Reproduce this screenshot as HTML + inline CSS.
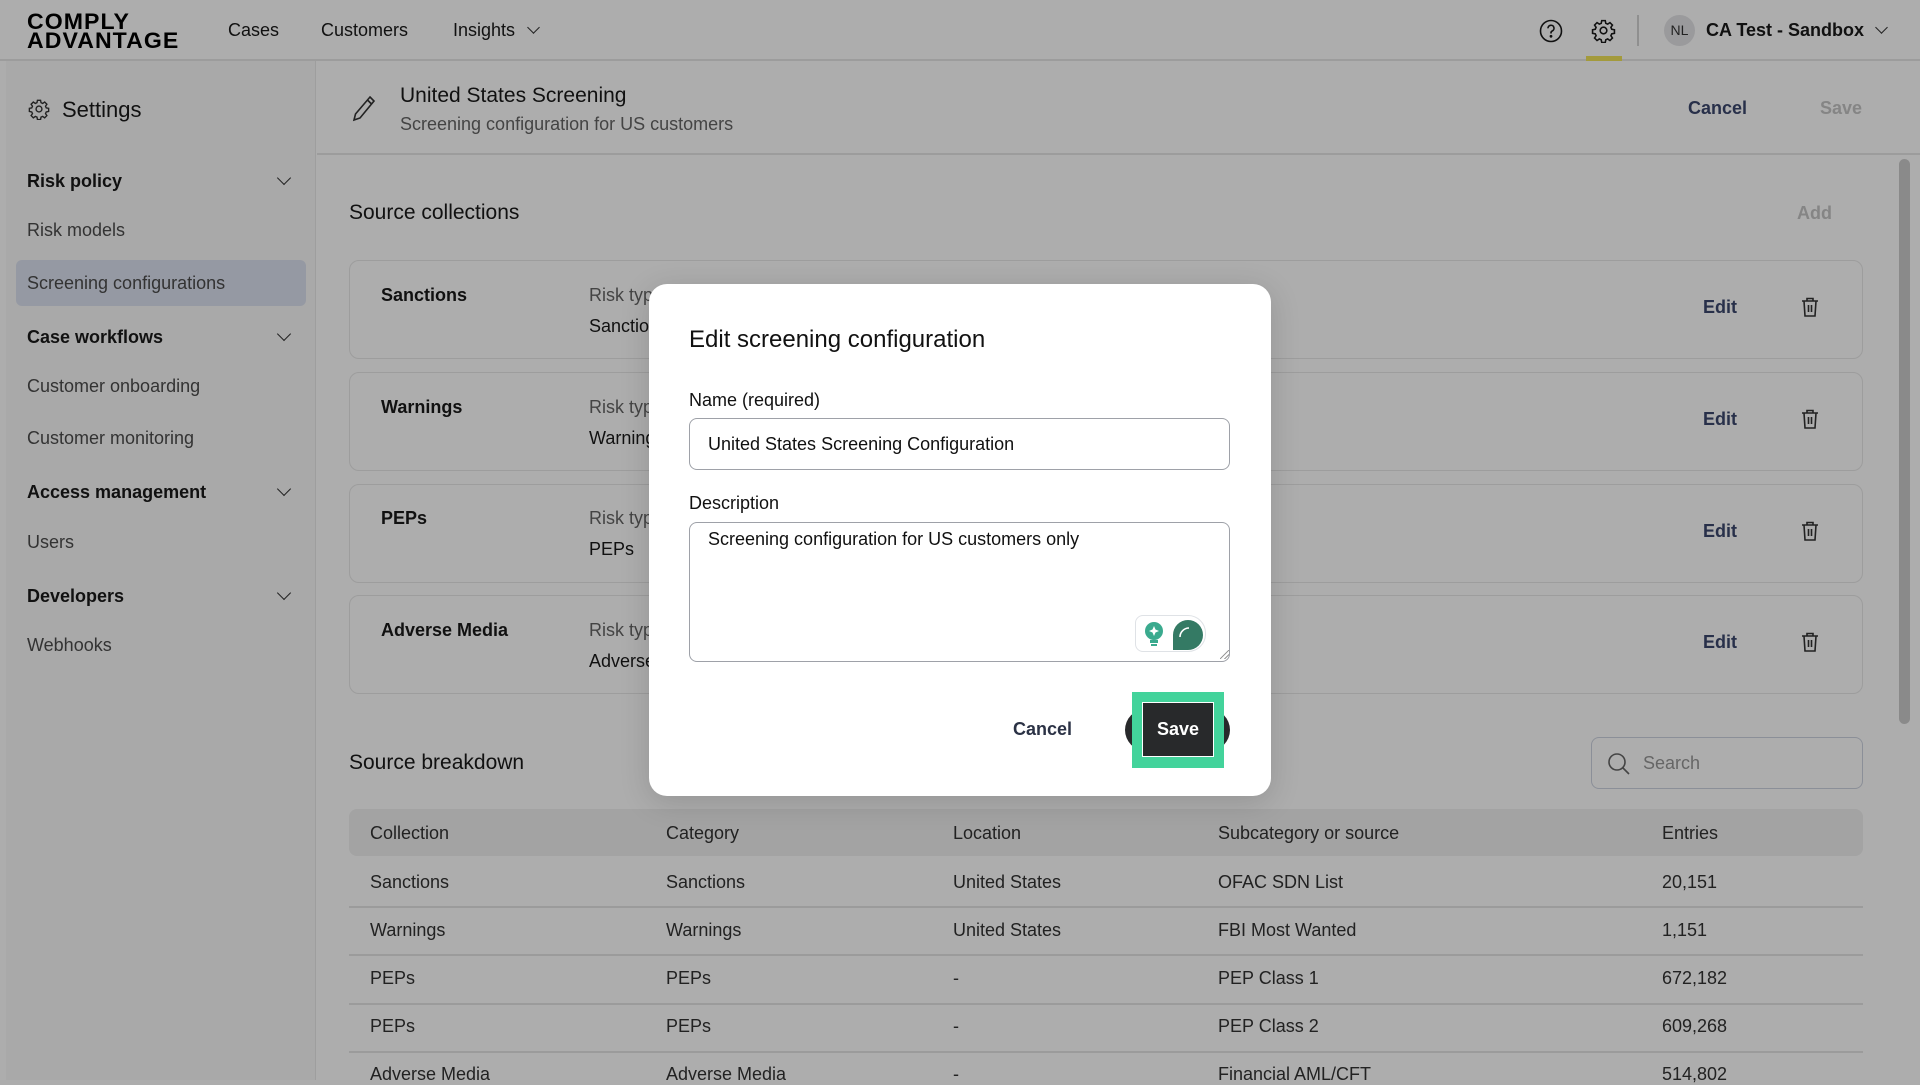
<!DOCTYPE html>
<html><head><meta charset="utf-8"><style>
*{box-sizing:border-box;margin:0;padding:0}
body{width:1920px;height:1080px;overflow:hidden;background:#adadad;font-family:"Liberation Sans",Arial,sans-serif;color:#111;position:relative}
.a{position:absolute;white-space:nowrap}
.hdr{position:absolute;left:0;top:0;width:1920px;height:61px;background:#adadad;border-bottom:2px solid #9c9c9c}
.side{position:absolute;left:6px;top:61px;width:310px;height:1019px;background:#a9a9a9;border-right:1px solid #9e9e9e}
.sb{font-weight:bold;font-size:18px;color:#111}
.sn{font-size:18px;color:#333}
.chev{position:absolute;width:10px;height:10px;border-right:1.6px solid #222;border-bottom:1.6px solid #222;transform:rotate(45deg)}
.card{position:absolute;left:349px;width:1514px;height:99px;border:1.5px solid #9d9d9d;border-radius:10px}
.ct{font-weight:bold;font-size:18px}
.rt{font-size:18px;color:#444}
.rv{font-size:18px;color:#111}
.ed{font-weight:bold;font-size:18px;color:#28304a}
.td{font-size:18px;color:#222}
.line{position:absolute;left:349px;width:1514px;height:1.5px;background:#9b9b9b}
</style></head><body>
<div class="hdr"></div>
<div class="a" style="left:27px;top:12px;font-weight:900;font-size:22px;line-height:19px;letter-spacing:1px;color:#000;transform:scaleX(1.05);transform-origin:left">COMPLY<br>ADVANTAGE</div>
<div class="a" style="left:228px;top:20px;font-size:18px">Cases</div>
<div class="a" style="left:321px;top:20px;font-size:18px">Customers</div>
<div class="a" style="left:453px;top:20px;font-size:18px">Insights</div>
<div class="chev" style="left:529px;top:23px;width:9px;height:9px;border-width:1.3px"></div>
<svg class="a" style="left:1539px;top:19px" width="24" height="24" viewBox="0 0 24 24" fill="none" stroke="#111" stroke-width="1.6"><circle cx="12" cy="12" r="10.5"/><path d="M9 9.3a3 3 0 1 1 4.2 2.7c-.8.4-1.2 1-1.2 1.8v.7"/><circle cx="12" cy="17.3" r=".6" fill="#111"/></svg>
<svg class="a" style="left:1591px;top:18px" width="25" height="25" viewBox="0 0 24 24" fill="none" stroke="#111" stroke-width="1.5"><circle cx="12" cy="12" r="3.2"/><path d="M10.3 2.5h3.4l.5 2.6 1.8.8 2.2-1.5 2.4 2.4-1.5 2.2.8 1.8 2.6.5v3.4l-2.6.5-.8 1.8 1.5 2.2-2.4 2.4-2.2-1.5-1.8.8-.5 2.6h-3.4l-.5-2.6-1.8-.8-2.2 1.5-2.4-2.4 1.5-2.2-.8-1.8-2.6-.5v-3.4l2.6-.5.8-1.8-1.5-2.2 2.4-2.4 2.2 1.5 1.8-.8z"/></svg>
<div class="a" style="left:1586px;top:56px;width:36px;height:5px;background:#a39a3c"></div>
<div class="a" style="left:1637px;top:15px;width:1.5px;height:31px;background:#8f8f8f"></div>
<div class="a" style="left:1664px;top:15px;width:31px;height:31px;border-radius:50%;background:#9a9a9c;font-size:14px;text-align:center;line-height:31px;color:#222">NL</div>
<div class="a" style="left:1706px;top:20px;font-size:18px;font-weight:bold;color:#111">CA Test - Sandbox</div>
<div class="chev" style="left:1877px;top:23px;width:9px;height:9px;border-width:1.3px"></div>

<div class="side"></div>
<svg class="a" style="left:28px;top:98px" width="22" height="22" viewBox="0 0 24 24" fill="none" stroke="#222" stroke-width="1.5"><circle cx="12" cy="12" r="3.2"/><path d="M10.3 2.5h3.4l.5 2.6 1.8.8 2.2-1.5 2.4 2.4-1.5 2.2.8 1.8 2.6.5v3.4l-2.6.5-.8 1.8 1.5 2.2-2.4 2.4-2.2-1.5-1.8.8-.5 2.6h-3.4l-.5-2.6-1.8-.8-2.2 1.5-2.4-2.4 1.5-2.2-.8-1.8-2.6-.5v-3.4l2.6-.5.8-1.8-1.5-2.2 2.4-2.4 2.2 1.5 1.8-.8z"/></svg>
<div class="a" style="left:62px;top:97px;font-size:22px;color:#111">Settings</div>
<div class="a sb" style="left:27px;top:171px">Risk policy</div><div class="chev" style="left:279px;top:173px"></div>
<div class="a sn" style="left:27px;top:220px">Risk models</div>
<div class="a" style="left:16px;top:260px;width:290px;height:46px;background:#9599a3;border-radius:6px"></div>
<div class="a sn" style="left:27px;top:273px">Screening configurations</div>
<div class="a sb" style="left:27px;top:327px">Case workflows</div><div class="chev" style="left:279px;top:329px"></div>
<div class="a sn" style="left:27px;top:376px">Customer onboarding</div>
<div class="a sn" style="left:27px;top:428px">Customer monitoring</div>
<div class="a sb" style="left:27px;top:482px">Access management</div><div class="chev" style="left:279px;top:484px"></div>
<div class="a sn" style="left:27px;top:532px">Users</div>
<div class="a sb" style="left:27px;top:586px">Developers</div><div class="chev" style="left:279px;top:588px"></div>
<div class="a sn" style="left:27px;top:635px">Webhooks</div>

<div class="a" style="left:317px;top:153px;width:1603px;height:1.5px;background:#9c9c9c"></div>
<svg class="a" style="left:351px;top:94px" width="26" height="28" viewBox="0 0 26 28" fill="none" stroke="#222" stroke-width="1.6"><path d="M19 3l4 4L9 24l-6 2 1.5-6z"/><path d="M16.5 6l4 4"/></svg>
<div class="a" style="left:400px;top:84px;font-size:21px;color:#111">United States Screening</div>
<div class="a" style="left:400px;top:114px;font-size:18px;color:#444">Screening configuration for US customers</div>
<div class="a ed" style="left:1688px;top:98px">Cancel</div>
<div class="a" style="left:1820px;top:98px;font-size:18px;font-weight:bold;color:#858585">Save</div>
<div class="a" style="left:1899px;top:159px;width:11px;height:565px;border-radius:6px;background:#8a8a8a"></div>

<div class="a" style="left:349px;top:201px;font-size:21px;color:#111">Source collections</div>
<div class="a" style="left:1797px;top:203px;font-size:18px;font-weight:bold;color:#858585">Add</div>

<div class="card" style="top:260px"></div>
<div class="card" style="top:372px"></div>
<div class="card" style="top:484px"></div>
<div class="card" style="top:595px"></div>
<div class="a ct" style="left:381px;top:285px">Sanctions</div><div class="a rt" style="left:589px;top:285px">Risk type</div><div class="a rv" style="left:589px;top:316px">Sanctions</div>
<div class="a ct" style="left:381px;top:397px">Warnings</div><div class="a rt" style="left:589px;top:397px">Risk type</div><div class="a rv" style="left:589px;top:428px">Warnings</div>
<div class="a ct" style="left:381px;top:508px">PEPs</div><div class="a rt" style="left:589px;top:508px">Risk type</div><div class="a rv" style="left:589px;top:539px">PEPs</div>
<div class="a ct" style="left:381px;top:620px">Adverse Media</div><div class="a rt" style="left:589px;top:620px">Risk type</div><div class="a rv" style="left:589px;top:651px">Adverse Media</div>
<div class="a ed" style="left:1703px;top:297px">Edit</div>
<div class="a ed" style="left:1703px;top:409px">Edit</div>
<div class="a ed" style="left:1703px;top:521px">Edit</div>
<div class="a ed" style="left:1703px;top:632px">Edit</div>
<svg class="a" style="left:1801px;top:297px" width="18" height="20" viewBox="0 0 18 20" fill="none" stroke="#222" stroke-width="1.6"><path d="M1 4h16M6 4V1.5h6V4M3 4l1 15h10l1-15M7.5 8v7M10.5 8v7"/></svg>
<svg class="a" style="left:1801px;top:409px" width="18" height="20" viewBox="0 0 18 20" fill="none" stroke="#222" stroke-width="1.6"><path d="M1 4h16M6 4V1.5h6V4M3 4l1 15h10l1-15M7.5 8v7M10.5 8v7"/></svg>
<svg class="a" style="left:1801px;top:521px" width="18" height="20" viewBox="0 0 18 20" fill="none" stroke="#222" stroke-width="1.6"><path d="M1 4h16M6 4V1.5h6V4M3 4l1 15h10l1-15M7.5 8v7M10.5 8v7"/></svg>
<svg class="a" style="left:1801px;top:632px" width="18" height="20" viewBox="0 0 18 20" fill="none" stroke="#222" stroke-width="1.6"><path d="M1 4h16M6 4V1.5h6V4M3 4l1 15h10l1-15M7.5 8v7M10.5 8v7"/></svg>

<div class="a" style="left:349px;top:751px;font-size:21px;color:#111">Source breakdown</div>
<div class="a" style="left:1591px;top:737px;width:272px;height:52px;border:1.5px solid #8b8f98;border-radius:8px"></div>
<svg class="a" style="left:1607px;top:752px" width="24" height="24" viewBox="0 0 24 24" fill="none" stroke="#444" stroke-width="1.6"><circle cx="10" cy="10" r="8"/><path d="M16 16l6 6"/></svg>
<div class="a" style="left:1643px;top:753px;font-size:18px;color:#666">Search</div>

<div class="a" style="left:349px;top:809px;width:1514px;height:47px;background:#a3a3a3;border-radius:8px"></div>
<div class="a td" style="left:370px;top:823px">Collection</div><div class="a td" style="left:666px;top:823px">Category</div><div class="a td" style="left:953px;top:823px">Location</div><div class="a td" style="left:1218px;top:823px">Subcategory or source</div><div class="a td" style="left:1662px;top:823px">Entries</div>
<div class="a td" style="left:370px;top:872px">Sanctions</div><div class="a td" style="left:666px;top:872px">Sanctions</div><div class="a td" style="left:953px;top:872px">United States</div><div class="a td" style="left:1218px;top:872px">OFAC SDN List</div><div class="a td" style="left:1662px;top:872px">20,151</div>
<div class="line" style="top:906px"></div>
<div class="a td" style="left:370px;top:920px">Warnings</div><div class="a td" style="left:666px;top:920px">Warnings</div><div class="a td" style="left:953px;top:920px">United States</div><div class="a td" style="left:1218px;top:920px">FBI Most Wanted</div><div class="a td" style="left:1662px;top:920px">1,151</div>
<div class="line" style="top:954px"></div>
<div class="a td" style="left:370px;top:968px">PEPs</div><div class="a td" style="left:666px;top:968px">PEPs</div><div class="a td" style="left:953px;top:968px">-</div><div class="a td" style="left:1218px;top:968px">PEP Class 1</div><div class="a td" style="left:1662px;top:968px">672,182</div>
<div class="line" style="top:1003px"></div>
<div class="a td" style="left:370px;top:1016px">PEPs</div><div class="a td" style="left:666px;top:1016px">PEPs</div><div class="a td" style="left:953px;top:1016px">-</div><div class="a td" style="left:1218px;top:1016px">PEP Class 2</div><div class="a td" style="left:1662px;top:1016px">609,268</div>
<div class="line" style="top:1051px"></div>
<div class="a td" style="left:370px;top:1064px">Adverse Media</div><div class="a td" style="left:666px;top:1064px">Adverse Media</div><div class="a td" style="left:953px;top:1064px">-</div><div class="a td" style="left:1218px;top:1064px">Financial AML/CFT</div><div class="a td" style="left:1662px;top:1064px">514,802</div>

<!-- modal -->
<div class="a" style="left:649px;top:284px;width:622px;height:512px;background:#fff;border-radius:18px;box-shadow:0 6px 30px rgba(0,0,0,0.15)"></div>
<div class="a" style="left:689px;top:326px;font-size:24px;color:#111">Edit screening configuration</div>
<div class="a" style="left:689px;top:390px;font-size:18px;color:#111">Name (required)</div>
<div class="a" style="left:689px;top:418px;width:541px;height:52px;border:1.5px solid #9ea1a8;border-radius:8px"></div>
<div class="a" style="left:708px;top:434px;font-size:18px;color:#111">United States Screening Configuration</div>
<div class="a" style="left:689px;top:493px;font-size:18px;color:#111">Description</div>
<div class="a" style="left:689px;top:522px;width:541px;height:140px;border:1.5px solid #9ea1a8;border-radius:8px"></div>
<div class="a" style="left:708px;top:529px;font-size:18px;color:#111">Screening configuration for US customers only</div>
<div class="a" style="left:1135px;top:615px;width:71px;height:37px;border:1.5px solid #dfe2e6;border-radius:8px 18px 18px 8px;background:#fff"></div>
<svg class="a" style="left:1143px;top:621px" width="22" height="26" viewBox="0 0 22 26"><circle cx="11" cy="10" r="9" fill="#3aaa8e"/><rect x="7" y="19" width="8" height="3" fill="#3aaa8e"/><rect x="8" y="23" width="6" height="2" fill="#3aaa8e"/><path d="M11 5l1.5 3.5L16 10l-3.5 1.5L11 15l-1.5-3.5L6 10l3.5-1.5z" fill="#fff"/></svg>
<svg class="a" style="left:1172px;top:619px" width="32" height="32" viewBox="0 0 32 32"><path d="M16 1a15 15 0 0 1 0 30H1V16A15 15 0 0 1 16 1z" fill="#347a64"/><path d="M8 18a9 9 0 0 1 9-9" stroke="#fff" stroke-width="1.6" fill="none"/></svg>
<div class="a" style="left:1220px;top:650px;width:9px;height:9px;background:linear-gradient(135deg,transparent 45%,#999 45%,#999 55%,transparent 55%,transparent 70%,#999 70%,#999 80%,transparent 80%)"></div>
<div class="a" style="left:1013px;top:719px;font-size:18px;font-weight:bold;color:#2b3245">Cancel</div>
<div class="a" style="left:1125px;top:709px;width:105px;height:42px;border-radius:21px;background:#28292b"></div>
<div class="a" style="left:1132px;top:692px;width:92px;height:76px;background:#43d39b"></div>
<div class="a" style="left:1142px;top:702px;width:72px;height:55px;background:#28292b;border:1.5px solid #fff"></div>
<div class="a" style="left:1157px;top:719px;font-size:18px;font-weight:bold;color:#fff">Save</div>
</body></html>
